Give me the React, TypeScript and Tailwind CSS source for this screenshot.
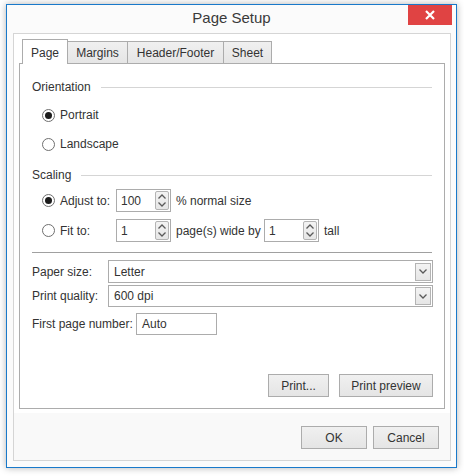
import React from 'react';

const font = { fontFamily: '"Liberation Sans", Arial, sans-serif' };

function Radio({ checked }: { checked?: boolean }) {
  return (
    <span className="w-[13px] h-[13px] rounded-full border border-[#6f6f6f] bg-white flex items-center justify-center shrink-0">
      {checked && <span className="w-[7px] h-[7px] rounded-full bg-[#1c1c1c]" />}
    </span>
  );
}

function Chevron({ up }: { up?: boolean }) {
  return (
    <svg width="8" height="5" viewBox="0 0 8 5" className="block">
      <path
        d={up ? 'M0.5 4.5 L4 1 L7.5 4.5' : 'M0.5 0.5 L4 4 L7.5 0.5'}
        fill="none"
        stroke="#5a5a5a"
        strokeWidth="1.3"
      />
    </svg>
  );
}

function Spin({ value }: { value: string }) {
  return (
    <div className="w-[55px] h-[23px] border border-[#acacac] bg-white flex items-center justify-between pl-[4px] pr-px">
      <span>{value}</span>
      <div className="w-[14px] h-[19px] border border-[#b4b4b4] rounded-[2px] bg-gradient-to-b from-[#f3f3f3] to-[#e6e6e6] flex flex-col items-center justify-center gap-[3px]">
        <Chevron up />
        <Chevron />
      </div>
    </div>
  );
}

function Select({ value, h }: { value: string; h: string }) {
  return (
    <div className={`flex-1 ${h} border border-[#acacac] bg-white flex items-center justify-between pl-[5px] pr-px`}>
      <span>{value}</span>
      <div className="w-[16px] h-[18px] border border-[#b4b4b4] bg-gradient-to-b from-[#f3f3f3] to-[#e6e6e6] flex items-center justify-center">
        <Chevron />
      </div>
    </div>
  );
}

function Button({ label, w }: { label: string; w: string }) {
  return (
    <div className={`${w} h-[23px] border border-[#acacac] bg-gradient-to-b from-[#f0f0f0] to-[#e5e5e5] flex items-center justify-center text-[#333]`}>
      {label}
    </div>
  );
}

function GroupHeader({ title }: { title: string }) {
  return (
    <div className="h-[16px] flex items-center pl-[12px] pr-[12px]">
      <span>{title}</span>
      <div className="flex-1 h-px bg-[#d5d5d5] ml-[10px]" />
    </div>
  );
}

const tabs = [
  { name: 'Page', w: 'w-[46px]' },
  { name: 'Margins', w: 'w-[61px]' },
  { name: 'Header/Footer', w: 'w-[97px]' },
  { name: 'Sheet', w: 'w-[49px]' },
];

export default function App() {
  return (
    <div className="w-[464px] h-[476px] bg-white pt-[4px] pl-[6px] text-[12px] text-[#333]" style={font}>
      <div className="relative w-[451px] h-[464px] border border-[#1979ca] bg-[#fbfbfb] shadow-[0_0_7px_rgba(0,0,0,0.3)] flex flex-col">
        {/* title bar */}
        <div className="h-[28px] flex items-center justify-center text-[15px] text-[#3a3a3a] pb-[1px]">
          Page Setup
        </div>
        <div className="absolute top-0 right-[4px] w-[44px] h-[20px] bg-[#e04343] flex items-center justify-center">
          <svg width="10" height="10" viewBox="0 0 10 10">
            <path d="M1 1 L9 9 M9 1 L1 9" stroke="white" strokeWidth="2.2" />
          </svg>
        </div>

        {/* frame */}
        <div className="ml-[6px] mr-[5px] h-[428px] border border-[#d5d5d5] flex flex-col">
          <div className="bg-white h-[379px] px-[5px] pt-[5px] pb-[4px] flex flex-col">
            {/* tabs */}
            <div className="flex items-end pl-[3px] h-[24px] relative z-10">
              {tabs.map((t, i) => (
                <div
                  key={t.name}
                  className={`${t.w} ${i > 0 ? '-ml-px' : ''} flex items-center justify-center border border-[#acacac] ${
                    i === 0
                      ? 'h-[25px] -mb-px border-b-0 bg-white pt-px'
                      : 'h-[22px] border-b-0 bg-gradient-to-b from-[#f0f0f0] to-[#e5e5e5]'
                  }`}
                >
                  {t.name}
                </div>
              ))}
            </div>

            {/* panel */}
            <div className="flex-1 border border-[#acacac] bg-white flex flex-col">
              <div className="mt-[15px]">
                <GroupHeader title="Orientation" />
              </div>
              <div className="mt-[10px] h-[20px] flex items-center pl-[22px]">
                <Radio checked />
                <span className="ml-[5px]">Portrait</span>
              </div>
              <div className="mt-[9px] h-[20px] flex items-center pl-[22px]">
                <Radio />
                <span className="ml-[5px]">Landscape</span>
              </div>
              <div className="mt-[13px]">
                <GroupHeader title="Scaling" />
              </div>
              <div className="mt-[6px] h-[23px] flex items-center pl-[22px]">
                <Radio checked />
                <span className="ml-[5px] w-[56px]">Adjust to:</span>
                <Spin value="100" />
                <span className="ml-[5px]">% normal size</span>
              </div>
              <div className="mt-[7px] h-[23px] flex items-center pl-[22px]">
                <Radio />
                <span className="ml-[5px] w-[56px]">Fit to:</span>
                <Spin value="1" />
                <span className="ml-[5px] w-[88px]">page(s) wide by</span>
                <Spin value="1" />
                <span className="ml-[5px]">tall</span>
              </div>
              <div className="mt-[10px] mx-[12px] h-px bg-[#a0a0a0]" />
              <div className="mt-[7px] flex items-center pl-[12px] pr-[11px]">
                <span className="w-[76px]">Paper size:</span>
                <Select value="Letter" h="h-[23px]" />
              </div>
              <div className="mt-[2px] flex items-center pl-[12px] pr-[11px]">
                <span className="w-[76px]">Print quality:</span>
                <Select value="600 dpi" h="h-[22px]" />
              </div>
              <div className="mt-[6px] flex items-center pl-[12px]">
                <span className="w-[104px]">First page number:</span>
                <div className="w-[81px] h-[22px] border border-[#acacac] bg-white flex items-center pl-[5px]">
                  Auto
                </div>
              </div>
              <div className="mt-auto pb-[11px] pr-[11px] flex justify-end gap-[10px]">
                <Button label="Print..." w="w-[61px]" />
                <Button label="Print preview" w="w-[94px]" />
              </div>
            </div>
          </div>

          {/* footer */}
          <div className="flex-1 bg-[#f9f9f9] pt-[13px] pr-[11px] flex justify-end items-start gap-[6px]">
            <Button label="OK" w="w-[66px]" />
            <Button label="Cancel" w="w-[66px]" />
          </div>
        </div>
      </div>
    </div>
  );
}
